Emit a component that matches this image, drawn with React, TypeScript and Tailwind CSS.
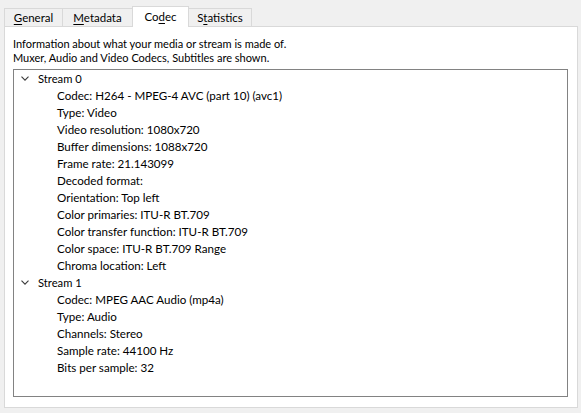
type Row = { label: string; children: string[] };

const streams: Row[] = [
  {
    label: "Stream 0",
    children: [
      "Codec: H264 - MPEG-4 AVC (part 10) (avc1)",
      "Type: Video",
      "Video resolution: 1080x720",
      "Buffer dimensions: 1088x720",
      "Frame rate: 21.143099",
      "Decoded format:",
      "Orientation: Top left",
      "Color primaries: ITU-R BT.709",
      "Color transfer function: ITU-R BT.709",
      "Color space: ITU-R BT.709 Range",
      "Chroma location: Left",
    ],
  },
  {
    label: "Stream 1",
    children: [
      "Codec: MPEG AAC Audio (mp4a)",
      "Type: Audio",
      "Channels: Stereo",
      "Sample rate: 44100 Hz",
      "Bits per sample: 32",
    ],
  },
];

function Tab({
  pre,
  key_,
  post,
  active,
  width,
}: {
  pre: string;
  key_: string;
  post: string;
  active?: boolean;
  width: string;
}) {
  return (
    <div
      className={
        active
          ? `relative z-10 -mb-px flex h-[21px] items-center justify-center border border-b-0 border-[#d9d9d9] bg-white ${width}`
          : `mt-[2px] flex h-[18px] items-center justify-center border border-b-0 border-[#d9d9d9] bg-[#f0f0f0] ${width} -ml-px first:ml-0`
      }
    >
      <span className="text-[11.5px] leading-none text-black">
        {pre}
        <span className="underline underline-offset-2">{key_}</span>
        {post}
      </span>
    </div>
  );
}

function Chevron() {
  return (
    <svg width="8" height="5" viewBox="0 0 8 5" className="shrink-0">
      <polyline points="0.5,0.6 4,4.1 7.5,0.6" fill="none" stroke="#3a3a3a" strokeWidth="1.1" />
    </svg>
  );
}

export default function App() {
  return (
    <div
      className="h-[413px] w-[581px] bg-[#f0f0f0] pl-[4px] pt-[6px] text-black"
      style={{ fontFamily: 'Lato, "Noto Sans", sans-serif' }}
    >
      <div className="flex items-end">
        <Tab pre="" key_="G" post="eneral" width="w-[59px]" />
        <Tab pre="" key_="M" post="etadata" width="w-[71px]" />
        <Tab pre="Co" key_="d" post="ec" active width="w-[57px] -ml-px" />
        <Tab pre="S" key_="t" post="atistics" width="w-[64px]" />
      </div>
      <div className="h-[382px] w-[574px] border border-[#d9d9d9] bg-white pl-[8px] pr-[9px] pt-[10px]">
        <p className="text-[11px] leading-[14px]">
          Information about what your media or stream is made of.
          <br />
          Muxer, Audio and Video Codecs, Subtitles are shown.
        </p>
        <div className="mt-[4px] h-[328px] border border-[#828282]">
          {streams.map((s) => (
            <div key={s.label}>
              <div className="flex h-[17px] items-center pl-[7px]">
                <Chevron />
                <span className="ml-[9px] text-[11.2px] leading-none">{s.label}</span>
              </div>
              {s.children.map((c) => (
                <div key={c} className="flex h-[17px] items-center pl-[43px] text-[11.6px] leading-none">
                  {c}
                </div>
              ))}
            </div>
          ))}
        </div>
      </div>
    </div>
  );
}
